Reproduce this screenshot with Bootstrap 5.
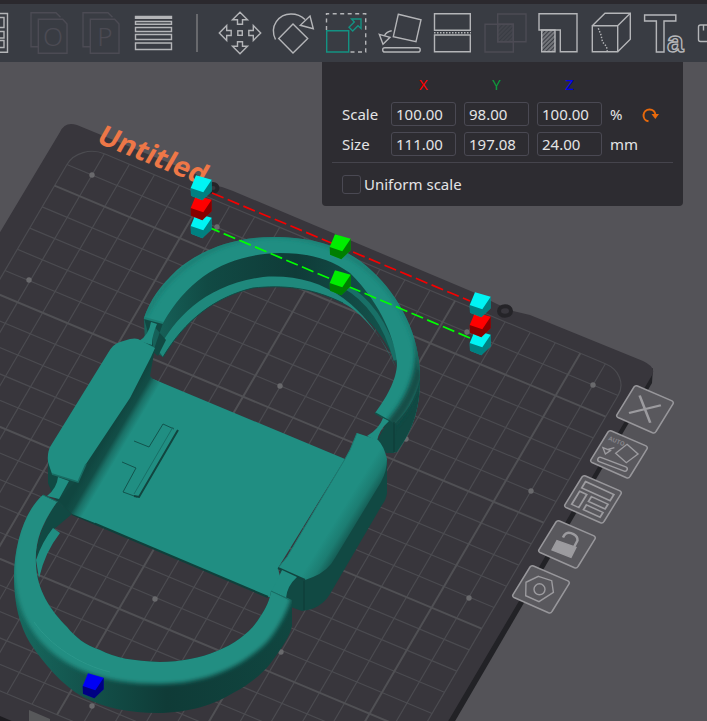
<!DOCTYPE html>
<html lang="en">
<head>
<meta charset="utf-8">
<meta name="viewport" content="width=device-width, initial-scale=1">
<title>Scale tool</title>
<link href="https://cdn.jsdelivr.net/npm/bootstrap@5.3.0/dist/css/bootstrap.min.css" rel="stylesheet">
<style>
body{background:#545358;font-family:"Noto Sans","Open Sans",sans-serif;font-size:15px;color:#e4e4e6;overflow:hidden}
.toolstrip{background:#393c43;border-top:4px solid #2b292e;height:62px}
.tool{width:53px;height:58px;background:none;border:0;padding:0;color:#b4b5b8}
.tool.file{width:52px}
.tool.edge{width:23px}
.tool.off{color:#4c4b54}
.tool svg,.tile svg{display:block;margin:auto;fill:none;stroke:currentColor;stroke-width:1.4;overflow:visible}
.tool svg text{font-weight:300}
.tool svg text.glyph{font-family:"Liberation Sans",sans-serif;font-weight:700}
.rule-v{width:2px;height:38px;background:#68696d;margin:0 15px 0 17px}
.gizmo{top:0;right:24px;width:361px;background:#2d2c31;border-radius:0 0 4px 4px;padding:10px 10px 12px}
.field-row{padding:0 10px}
.fields{display:grid;grid-template-columns:41px 65px 65px 65px 28px;gap:6px 8px;align-items:center}
.fields>*{line-height:24px}
.fields input{height:24px;width:100%;background:#2d2c31;border:1px solid #4a4953;border-radius:3px;color:#e4e4e6;padding:0 4px;font-size:15px;line-height:22px}
.axis{text-align:center}
.ax-x{color:#f00}.ax-y{color:#0b9c3c}.ax-z{color:#0000f0}
.reset{background:none;border:0;padding:0;height:24px;width:24px;margin-top:30px}
.line-h{border-top:1px solid #45444c;opacity:1;margin:6px 0 11px}
.uniform{padding:0 10px;line-height:20px}
.uniform input{appearance:none;width:19px;height:19px;border:1px solid #4a4953;border-radius:3px;margin:0 3px 0 0;background:#2d2c31}
.uniform input:checked{background:#208e82}
.tile{position:absolute;width:60px;height:52px;background:none;border:0;padding:0;color:#9c9b9f}
.t1{left:615px;top:321px}.t2{left:589px;top:366px}.t3{left:563px;top:411px}.t4{left:537px;top:456px}.t5{left:511px;top:501px}
.grid-thin,.grid-bold{fill:none;vector-effect:non-scaling-stroke}
.grid-thin{stroke:#4b4b50;stroke-width:1.2}
.grid-bold{stroke:#505054;stroke-width:2}
</style>
</head>
<body class="d-flex flex-column min-vh-100">
<svg width="0" height="0" class="position-absolute" aria-hidden="true">
<defs>
<pattern id="hatch" width="3" height="3" patternUnits="userSpaceOnUse" patternTransform="rotate(45)"><path d="M1 0V3" stroke="#a4a5a9" stroke-width="1.100"/></pattern>
<pattern id="hatch-off" width="3" height="3" patternUnits="userSpaceOnUse" patternTransform="rotate(45)"><path d="M1 0V3" stroke="#4c4b54" stroke-width="1"/></pattern>
<symbol id="cube" viewBox="-12 -14 24 28" overflow="visible">
<path d="M-5-12.7 10.7-8.3 10.7 3.3 1.3 12.3-10 7.7-10.3 0z" fill="currentColor"/>
<path d="M-10.3 0 2.3 4.3 10.7-8.3V3.3L1.3 12.3-10 7.7z" fill="#000" opacity=".47"/>
</symbol>
<symbol id="plaque" viewBox="0 0 60 52"><path d="M22.5 3 57 17.8Q59 19 58 21L41 48.500Q39.800 50.600 37.500 49.700L3 34.500Q1 33.500 2 31.500L19 4Q20.300 2 22.500 3z" fill="#59585d" stroke="#98979b" stroke-width="1.500"/></symbol>
</defs>
</svg>
<header class="toolstrip d-flex align-items-center overflow-hidden flex-shrink-0">
<button class="tool edge flex-shrink-0" aria-label="Split view"><svg width="23" height="44"><path d="M-3 2.500H7.500V41.300H-3M-3 6.500H4V16.500H-3M-3 20.500H4V27H-3M-3 29.500H4V36.500H-3"/></svg></button>
<button class="tool file off flex-shrink-0" aria-label="Split to objects"><svg width="44" height="44"><path d="M11 35.700H4V1.700H29L33.500 6.300M11.300 8.300H35.700L40 13V42.300H11.300z"/><text x="26" y="35" text-anchor="middle" font-size="26" fill="currentColor" stroke="none">O</text></svg></button>
<button class="tool file off flex-shrink-0" aria-label="Split to parts"><svg width="44" height="44"><path d="M11 35.700H4V1.700H29L33.500 6.300M11.300 8.300H35.700L40 13V42.300H11.300z"/><text x="26" y="35" text-anchor="middle" font-size="26" fill="currentColor" stroke="none">P</text></svg></button>
<button class="tool file flex-shrink-0" aria-label="Variable layer height"><svg width="44" height="44"><path d="M4.500 5.500H40.500V7.200H4.500z" fill="currentColor"/><path d="M4.500 10.500H40.500V13.300H4.500zM4.500 16.500H40.500V20.500H4.500zM4.500 23.500H40.500V28.500H4.500zM4.500 32H40.500V38.500H4.500z"/></svg></button>
<div class="rule-v flex-shrink-0"></div>
<button class="tool flex-shrink-0" aria-label="Move"><svg width="44" height="44"><rect x="19.800" y="19.800" width="4.500" height="4.500"/><path id="arw" d="M22 1.300 29.500 8.700H24.500V13.200H19.500V8.700H14.500z"/><use href="#arw" transform="rotate(90 22 22)"/><use href="#arw" transform="rotate(180 22 22)"/><use href="#arw" transform="rotate(270 22 22)"/></svg></button>
<button class="tool flex-shrink-0" aria-label="Rotate"><svg width="44" height="44"><path d="M22 13 36.700 27.500 22 42 7.700 27.500zM4.500 28.500C-2 15 8 3 20 3 25 3 30 4.500 34 8.500M39 5 42.300 17.700 29.300 14.300z"/></svg></button>
<button class="tool flex-shrink-0" aria-label="Scale"><svg width="44" height="44"><path d="M2.500 19V2.700H41.700V41H25" stroke-dasharray="4 3.500"/><path d="M2.700 19.700H24.700V41H2.700zM37 8H27.500L30.300 11 25 16.300 28.700 20 34 14.700 37 17.500z" stroke="#139283"/></svg></button>
<button class="tool flex-shrink-0" aria-label="Lay on face"><svg width="44" height="44"><path d="M21.300 3.300 44 8.700 39 30.700 16.300 25.700zM2.300 23.300 13 26.300 6 33.300zM14.700 19.700Q9.500 20.500 7.500 24.500"/><rect x="5.700" y="36.700" width="37.500" height="4.300" rx="2.100"/></svg></button>
<button class="tool flex-shrink-0" aria-label="Cut"><svg width="44" height="44"><path d="M4.500 2.700H40.300V19.300H4.500zM4.500 24H40.300V40.700H4.500z"/><path d="M4 21.700H41" stroke-dasharray="1.500 1.500"/></svg></button>
<button class="tool off flex-shrink-0" aria-label="Mesh boolean"><svg width="44" height="44"><path d="M14.700 3H43V30.700H14.700zM2 13.300H30.300V41H2z"/><path d="M14.700 13.300H30.300V30.700H14.700z" fill="url(#hatch-off)"/></svg></button>
<button class="tool flex-shrink-0" aria-label="Support painting"><svg width="44" height="44"><path d="M3 2.700H41V40.700H24.300V19H3z"/><path d="M5.700 19H19V40.700H5.700z" fill="url(#hatch)"/></svg></button>
<button class="tool flex-shrink-0" aria-label="Seam painting"><svg width="44" height="44"><path d="M3.300 14.700H28.700V40.700H3.300zM3.300 14.700 16 2.300H41.300V28.300L28.700 40.700M28.700 14.700 41.300 2.300"/><path d="M9.300 17.300 12 24 13.500 31 17.500 35.500 18.300 40.500" stroke-dasharray="1.500 1.500"/></svg></button>
<button class="tool flex-shrink-0" aria-label="Text"><svg width="44" height="44"><text class="glyph" x="2" y="40.500" font-size="53">T<tspan x="25" font-size="30" fill="#393c43">a</tspan></text></svg></button>
<button class="tool flex-shrink-0" aria-label="Measure"><svg width="44" height="44"><rect x="3.500" y="14" width="38" height="16.500" rx="2"/><path d="M8.500 14V19.500M13.500 14V19.500"/></svg></button>
</header>
<main class="position-relative flex-grow-1 overflow-hidden">
<svg class="position-absolute top-0 start-0 w-100 h-100" viewBox="0 62 707 659" preserveAspectRatio="xMinYMin slice" role="img" aria-label="Build plate with model">
<defs>
<linearGradient id="wall" x1="0" x2="1"><stop offset="0" stop-color="#17665d"/><stop offset=".25" stop-color="#114a44"/><stop offset=".6" stop-color="#0f3b38"/><stop offset="1" stop-color="#14554e"/></linearGradient>
<linearGradient id="low" x1="0" x2="1"><stop offset="0" stop-color="#17695f"/><stop offset=".25" stop-color="#13534c"/><stop offset=".55" stop-color="#0f3b37"/><stop offset="1" stop-color="#104640"/></linearGradient>
<linearGradient id="shade" gradientUnits="userSpaceOnUse" x1="112" y1="427" x2="129" y2="437"><stop offset="0" stop-color="#104640"/><stop offset=".4" stop-color="#124e47"/><stop offset=".65" stop-color="#1a7167"/><stop offset="1" stop-color="#208e82"/></linearGradient>
<linearGradient id="bev" gradientUnits="userSpaceOnUse" x1="345" y1="505" x2="366" y2="518"><stop offset="0" stop-color="#208e82"/><stop offset=".45" stop-color="#1c7d72"/><stop offset="1" stop-color="#114943"/></linearGradient>
<filter id="soft" x="-10%" y="-10%" width="120%" height="120%"><feGaussianBlur stdDeviation="2"/></filter>
<clipPath id="lowclip"><path id="lowshape" d="M43 495C25 510 14 545 14 577 14 605 20 626 30 643 45 665 62 685 83 697 105 708 130 713 157 713 190 713 215 704 233 693 250 684 262 674 270 664 282 648 290 636 292 626V600L271 591C270 600 266 608 260 617 245 643 205 662 160 662 133 661 115 658 100 650 85 645 75 637 67 627 50 610 37 590 36 565 34 540 44 520 57 502z"/></clipPath>
<clipPath id="topclip"><path d="M144 318C150 300 160 286 177 270 200 250 235 237 273 237 320 237 350 250 372 271 400 297 420 335 420 378 420 405 415 427 397 452L387 453 390 423 375 413C385 400 397 380 397 363 395 340 382 305 350 273 330 259 310 253 280 253 230 254 190 275 163 323z"/></clipPath>
</defs>
<path d="M653 368 652 383 447 735H438L646 374z" fill="#222226"/>
<path d="M-10 249 60 132Q65 121 77 125L196 174 208 184 222 187 233 191 473 292 497 304 513 311 530 315 643 361Q658 368 651 377L440 735H-10z" fill="#38363c"/>
<g transform="matrix(25.05 10.5 -12.4 21.2 79.35 143.3)">
<rect class="grid-thin" width="22" height="22" rx="1"/>
<path class="grid-thin" d="M1 0V22M2 0V22M3 0V22M4 0V22M6 0V22M7 0V22M8 0V22M9 0V22M11 0V22M12 0V22M13 0V22M14 0V22M16 0V22M17 0V22M18 0V22M19 0V22M21 0V22M0 1H22M0 3H22M0 4H22M0 5H22M0 6H22M0 8H22M0 9H22M0 10H22M0 11H22M0 13H22M0 14H22M0 15H22M0 16H22M0 18H22M0 19H22M0 20H22M0 21H22"/>
<path class="grid-bold" d="M5 0V22M10 0V22M15 0V22M20 0V22M0 2H22M0 7H22M0 12H22M0 17H22"/>
</g>
<g fill="#69696c"><circle cx="92" cy="175" r="2.700"/><circle cx="29" cy="280" r="2.700"/><circle cx="217" cy="227" r="2.700"/><circle cx="280" cy="386" r="2.700"/><circle cx="467" cy="332" r="2.700"/><circle cx="593" cy="385" r="2.700"/><circle cx="531" cy="491" r="2.700"/><circle cx="469" cy="598" r="2.700"/><circle cx="406" cy="439" r="2.700"/><circle cx="155" cy="599" r="2.700"/><circle cx="281" cy="652" r="2.700"/><circle cx="92" cy="706" r="2.700"/></g>
<path d="M0 716 14 722H0z" fill="#1d1c20"/><path d="M29 710 50 719V722H29z" fill="#57585a"/>
<g fill="none" stroke="#252428" stroke-width="4"><ellipse cx="213" cy="188" rx="4.500" ry="4"/><ellipse cx="505" cy="311" rx="6" ry="4.800"/></g>
<text transform="translate(95 142) rotate(22) skewX(-8)" font-family="Open Sans" font-weight="700" font-size="28" fill="#ee7747">Untitled</text>

<!-- upper band: wall, lip, rim -->
<path d="M144 318C150 300 185 245 273 237 350 240 395 300 397 366 385 335 362 310 343 303 310 285 283 284 253 288 215 297 185 320 163 357L145 345z" fill="url(#wall)"/>
<path d="M158 350C175 318 205 285 263 277 320 273 365 300 396 368 385 340 362 312 343 303 310 287 283 285 253 288 215 297 185 320 163 357z" fill="#1f887c"/>
<path d="M163 357C185 320 215 297 253 288 283 285 310 287 343 303" fill="none" stroke="#124b45" stroke-width="1"/>
<path d="M343 285C365 297 385 320 396 360" fill="none" stroke="#187067" stroke-width="5"/>
<g clip-path="url(#topclip)"><path d="M140 230H425V460H140z" fill="#208e82"/><path d="M423 352Q423 400 391 427L386 456H425z" fill="#114943"/><path d="M420 340Q425 385 390 425" fill="none" stroke="#124d46" stroke-width="10" filter="url(#soft)"/><path d="M145 317C160 285 200 238 273 236 350 236 410 290 421 370" fill="none" stroke="#1a776d" stroke-width="3" filter="url(#soft)"/></g>
<path d="M144 318 163 323 153 352 158 356 166 340 153 325V346L141 341 148 333z" fill="#114943"/>
<path d="M144 318 163 323" stroke="#1c7d72" stroke-width="2"/>
<path d="M151 322 157 324Q152 335 152 345L139 341Q149 335 151 322z" fill="#208e82"/>
<path d="M375 413 391 422" stroke="#135048" stroke-width="1.500"/>
<path d="M388 420 377 441 386 453 394 453 397 425z" fill="#114943"/><path d="M383 418 389 421Q379 430 377 441L367 436Q379 429 383 418z" fill="#208e82"/><path d="M394 422V452" stroke="#0e3b37"/>

<!-- base plate -->
<path d="M153 379 345 459 278 568 285 598 268 597 72 514 78 482z" fill="#208e82"/>
<path d="M72 514 268 597" stroke="#0f403b" stroke-width="2"/>
<path d="M155 348 150 376 153 379 170 387 95 523 72 514 57 502 52 493 60 480z" fill="url(#shade)"/>
<path d="M48 460 48 483 53 495 72 514 57 502 75 482z" fill="#114943"/>
<path d="M57 502 72 514 53 530 38 562 36 553Q40 525 57 502z" fill="#114943"/>
<path d="M108 353Q113 344 120 342L130 339Q135 338 138 339L155 348 151 357 130 398 86 464 78 482 52 474 48 462Q47 454 50 447z" fill="#208e82"/>
<path d="M52 474 78 482 86 464" stroke="#186d64" stroke-width="1.500" fill="none"/>
<path d="M58 477 69 481 59 499 47 496Q57 488 58 477z" fill="#208e82"/>
<path d="M134 441 149 447 163 424 174 429M122 462 136 468 123 492 137 497" fill="none" stroke="#12544d"/>
<path d="M173 427 134 494" stroke="#187067"/><path d="M178 430 139 497 134 496" fill="none" stroke="#11453f" stroke-width="2"/>

<!-- right block -->
<path d="M387 458V493Q386 500 382 505L330 594Q321 609 302 611L288 606 280 570z" fill="#114943"/>
<path d="M357 433 378 440Q384 446 387 459 387 471 381 482L335 558Q328 571 313 577L305 580 278 568 287 557 345 459 350 450z" fill="url(#bev)"/>
<path d="M357 433 350 450 345 459 287 557 278 568" fill="none" stroke="#1b7c72" stroke-width="1"/>
<path d="M278 568 305 580" stroke="#11453f" stroke-width="2"/><path d="M304 581V610" stroke="#0e3b37"/>
<path d="M282 570 297 577Q287 586 286 598L271 593z" fill="#208e82"/>

<!-- lower band -->
<path d="M53 528 60 533Q45 552 39 578L36 560Q42 542 53 528z" fill="#208e82"/>
<use href="#lowshape" fill="url(#low)"/>
<g clip-path="url(#lowclip)"><path d="M43 488C20 510 8 550 16 590 22 625 45 655 83 671 108 681 133 684 160 684 200 684 240 670 268 641 280 627 290 605 291 598L268 585 225 635 160 655 70 620 45 590 40 540 70 500z" fill="#208e82" filter="url(#soft)"/><path d="M34 622C50 645 80 665 110 672" fill="none" stroke="#36a094" stroke-width="1" opacity=".5"/></g>
<path d="M43 495 58 502M271 591 290 600" stroke="#186d64"/>

<path d="M212 193 470 301" stroke="#f50000" stroke-width="1.700" stroke-dasharray="12.500 4.500"/>
<path d="M208 227 470 338" stroke="#0f0" stroke-width="1.700" stroke-dasharray="12.500 4.500"/>
<g>
<use href="#cube" x="189" y="212" width="24" height="28" color="#00f4f4"/><use href="#cube" x="189" y="194" width="24" height="28" color="#f00"/><use href="#cube" x="189" y="174" width="24" height="28" color="#00f4f4"/>
<use href="#cube" x="328" y="233" width="24" height="28" color="#00ee00"/><use href="#cube" x="328" y="269" width="24" height="28" color="#00ee00"/>
<use href="#cube" x="468" y="329" width="24" height="28" color="#00f4f4"/><use href="#cube" x="468" y="311" width="24" height="28" color="#f00"/><use href="#cube" x="468" y="291" width="24" height="28" color="#00f4f4"/>
<use href="#cube" x="81" y="672" width="24" height="28" color="#0000f5"/>
</g>
</svg>
<section class="gizmo position-absolute" aria-label="Scale">
<div class="field-row d-flex align-items-start">
<div class="fields">
<span></span><span class="axis ax-x">X</span><span class="axis ax-y">Y</span><span class="axis ax-z">Z</span><span></span>
<label for="sx">Scale</label><input id="sx" value="100.00"><input aria-label="Scale Y" value="98.00"><input aria-label="Scale Z" value="100.00"><span>%</span>
<label for="dx">Size</label><input id="dx" value="111.00"><input aria-label="Size Y" value="197.08"><input aria-label="Size Z" value="24.00"><span>mm</span>
</div>
<button class="reset" aria-label="Reset scale"><svg width="24" height="24" fill="none"><path d="M10.500 18.300A6 6 0 1 1 17.500 12" stroke="#e8690b" stroke-width="2"/><path d="M13.500 11H21L17.300 16z" fill="#e8690b"/></svg></button>
</div>
<hr class="line-h">
<div class="uniform d-flex align-items-center"><input type="checkbox" id="uni"><label for="uni">Uniform scale</label></div>
</section>
<button class="tile t1" aria-label="Delete plate"><svg width="60" height="52"><use href="#plaque"/><path transform="matrix(1.18 .54 -.59 .97 20.500 2)" d="M7 7 25 25M25 7 7 25" stroke-width="2"/></svg></button>
<button class="tile t2" aria-label="Auto orient"><svg width="60" height="52"><use href="#plaque"/><path d="M38 16.300 49 26 37.300 34.700 26.700 25.300zM14 19.700 21.400 22.700 16.400 26zM25.400 19.700 19 21.500"/><path d="M11 31.500 36 41" stroke-width="6" stroke-linecap="round"/><path d="M11 31.500 36 41" stroke-width="3" stroke="#59585d" stroke-linecap="round"/><text transform="translate(19 12) rotate(22)" font-size="6" font-weight="700" fill="#86858a" stroke="none">AUTO</text></svg></button>
<button class="tile t3" aria-label="Arrange plate"><svg width="60" height="52"><use href="#plaque"/><path transform="matrix(1.18 .54 -.59 .97 20.500 2)" d="M4 4.500H28V11H4zM4 14.500H10V28H4zM14 14.500H28V19.500H14zM14 23H28V28H14z"/></svg></button>
<button class="tile t4" aria-label="Lock plate"><svg width="60" height="52"><use href="#plaque"/><path d="M20 22.700 39 29.300 34 39.300 15 32z" fill="currentColor"/><path d="M36.500 30 40.500 22.500C41 17 33 13.500 29 15.500Q27 17 26 19.500" stroke-width="2.500"/></svg></button>
<button class="tile t5" aria-label="Plate settings"><svg width="60" height="52"><use href="#plaque"/><path d="M27.400 13.300 40.700 17.700 42.400 29.300 28 38.700 14.700 32.700 15 19.300z"/><circle cx="28.500" cy="26.300" r="5.500"/></svg></button>
</main>
<script src="https://cdn.jsdelivr.net/npm/bootstrap@5.3.0/dist/js/bootstrap.bundle.min.js"></script>
</body>
</html>
